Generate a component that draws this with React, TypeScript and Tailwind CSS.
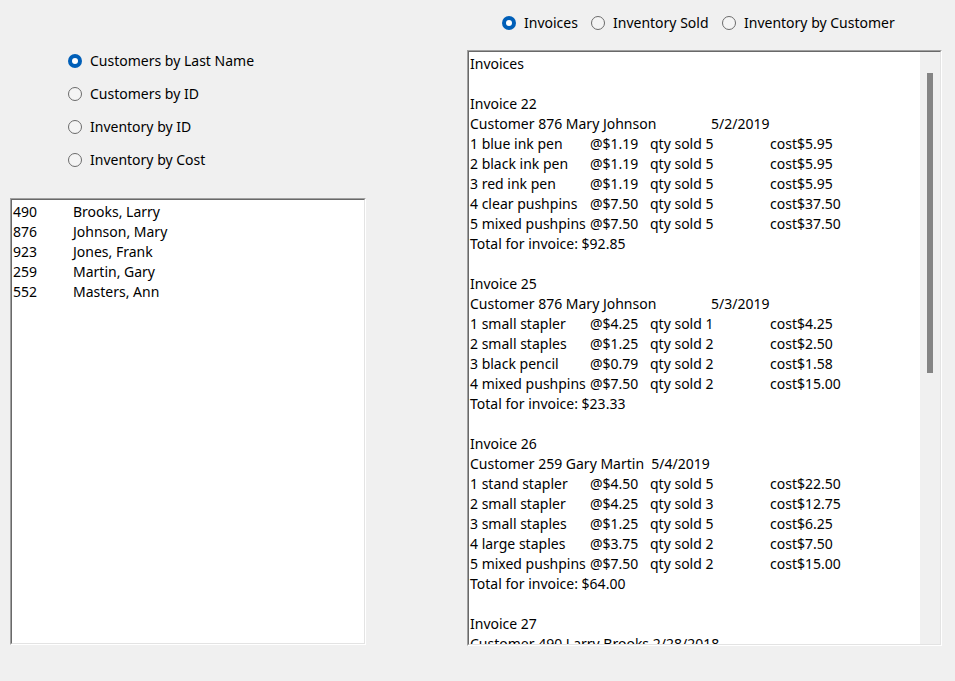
import React from "react";

type Item = { name: string; price: string; qty: string; cost: string };
type Invoice = { no: string; customer: string; date: string; pad?: boolean; items: Item[]; total?: string };

const invoices: Invoice[] = [
  {
    no: "22",
    customer: "Customer 876 Mary Johnson",
    date: "5/2/2019",
    pad: true,
    items: [
      { name: "1 blue ink pen", price: "@$1.19", qty: "qty sold 5", cost: "cost$5.95" },
      { name: "2 black ink pen", price: "@$1.19", qty: "qty sold 5", cost: "cost$5.95" },
      { name: "3 red ink pen", price: "@$1.19", qty: "qty sold 5", cost: "cost$5.95" },
      { name: "4 clear pushpins", price: "@$7.50", qty: "qty sold 5", cost: "cost$37.50" },
      { name: "5 mixed pushpins", price: "@$7.50", qty: "qty sold 5", cost: "cost$37.50" },
    ],
    total: "Total for invoice: $92.85",
  },
  {
    no: "25",
    customer: "Customer 876 Mary Johnson",
    date: "5/3/2019",
    pad: true,
    items: [
      { name: "1 small stapler", price: "@$4.25", qty: "qty sold 1", cost: "cost$4.25" },
      { name: "2 small staples", price: "@$1.25", qty: "qty sold 2", cost: "cost$2.50" },
      { name: "3 black pencil", price: "@$0.79", qty: "qty sold 2", cost: "cost$1.58" },
      { name: "4 mixed pushpins", price: "@$7.50", qty: "qty sold 2", cost: "cost$15.00" },
    ],
    total: "Total for invoice: $23.33",
  },
  {
    no: "26",
    customer: "Customer 259 Gary Martin  ",
    date: "5/4/2019",
    items: [
      { name: "1 stand stapler", price: "@$4.50", qty: "qty sold 5", cost: "cost$22.50" },
      { name: "2 small stapler", price: "@$4.25", qty: "qty sold 3", cost: "cost$12.75" },
      { name: "3 small staples", price: "@$1.25", qty: "qty sold 5", cost: "cost$6.25" },
      { name: "4 large staples", price: "@$3.75", qty: "qty sold 2", cost: "cost$7.50" },
      { name: "5 mixed pushpins", price: "@$7.50", qty: "qty sold 2", cost: "cost$15.00" },
    ],
    total: "Total for invoice: $64.00",
  },
  {
    no: "27",
    customer: "Customer 490 Larry Brooks ",
    date: "2/28/2018",
    items: [
      { name: "1 blue ink pen", price: "@$1.19", qty: "qty sold 3", cost: "cost$3.57" },
      { name: "2 large staples", price: "@$3.75", qty: "qty sold 1", cost: "cost$3.75" },
    ],
    total: "Total for invoice: $7.32",
  },
];

const customers = [
  ["490", "Brooks, Larry"],
  ["876", "Johnson, Mary"],
  ["923", "Jones, Frank"],
  ["259", "Martin, Gary"],
  ["552", "Masters, Ann"],
];

function Radio({ label, checked, className }: { label: string; checked?: boolean; className?: string }) {
  return (
    <div className={"flex items-center h-[20px] " + (className ?? "")}>
      {checked ? (
        <div className="w-[14px] h-[14px] rounded-full bg-[#005fb8] flex items-center justify-center shrink-0">
          <div className="w-[6px] h-[6px] rounded-full bg-white" />
        </div>
      ) : (
        <div className="w-[14px] h-[14px] rounded-full border border-[#6b6b6b] bg-[#f4f4f4] shrink-0" />
      )}
      <span className="ml-[8px] whitespace-nowrap">{label}</span>
    </div>
  );
}

// classic sunken (Fixed3D) border
function Sunken({ className, children }: { className?: string; children: React.ReactNode }) {
  return (
    <div className={"border border-t-[#a0a0a0] border-l-[#a0a0a0] border-r-white border-b-white " + (className ?? "")}>
      <div className="h-full border border-t-[#696969] border-l-[#696969] border-r-[#e3e3e3] border-b-[#e3e3e3] bg-white overflow-hidden">
        {children}
      </div>
    </div>
  );
}

export default function App() {
  return (
    <div
      className="w-[955px] h-[681px] bg-[#f0f0f0] text-black text-[14px] leading-[20px] flex overflow-hidden"
      style={{ fontFamily: '"Noto Sans", "Segoe UI", sans-serif' }}
    >
      {/* left column */}
      <div className="w-[366px] pl-[10px] flex flex-col">
        <div className="pt-[50.5px] pl-[58px] flex flex-col gap-[13.3px]">
          <Radio label="Customers by Last Name" checked />
          <Radio label="Customers by ID" />
          <Radio label="Inventory by ID" />
          <Radio label="Inventory by Cost" />
        </div>
        <Sunken className="mt-[28px] w-[356px] h-[447px]">
          <div className="pt-[2px] pl-[1px]">
            {customers.map(([id, name]) => (
              <div key={id} className="flex h-[20px]">
                <span className="w-[60px]">{id}</span>
                <span>{name}</span>
              </div>
            ))}
          </div>
        </Sunken>
      </div>

      {/* right column */}
      <div className="ml-[101px] flex flex-col">
        <div className="pt-[13px] pl-[35px] flex h-[50px]">
          <Radio label="Invoices" checked className="w-[89px]" />
          <Radio label="Inventory Sold" className="w-[131px]" />
          <Radio label="Inventory by Customer" />
        </div>
        <Sunken className="w-[475px] h-[596px]">
          <div className="flex h-full">
            <div className="flex-1 pt-[2px] pl-[1px] whitespace-pre">
              <div>Invoices</div>
              <div>&nbsp;</div>
              {invoices.map((inv) => (
                <div key={inv.no}>
                  <div>Invoice {inv.no}</div>
                  <div className="flex">
                    <span className={inv.pad ? "w-[241px]" : ""}>{inv.customer}</span>
                    <span>{inv.date}</span>
                  </div>
                  {inv.items.map((it) => (
                    <div key={it.name} className="flex">
                      <span className="w-[120px] shrink-0">{it.name}</span>
                      <span className="w-[60px] shrink-0">{it.price}</span>
                      <span className="w-[120px] shrink-0">{it.qty}</span>
                      <span>{it.cost}</span>
                    </div>
                  ))}
                  <div>{inv.total}</div>
                  <div>&nbsp;</div>
                </div>
              ))}
            </div>
            {/* scrollbar */}
            <div className="w-[20px] h-full bg-[#f0f0f0] shrink-0">
              <div className="mt-[21px] ml-[7px] w-[6px] h-[300px] bg-[#858585]" />
            </div>
          </div>
        </Sunken>
      </div>
    </div>
  );
}
